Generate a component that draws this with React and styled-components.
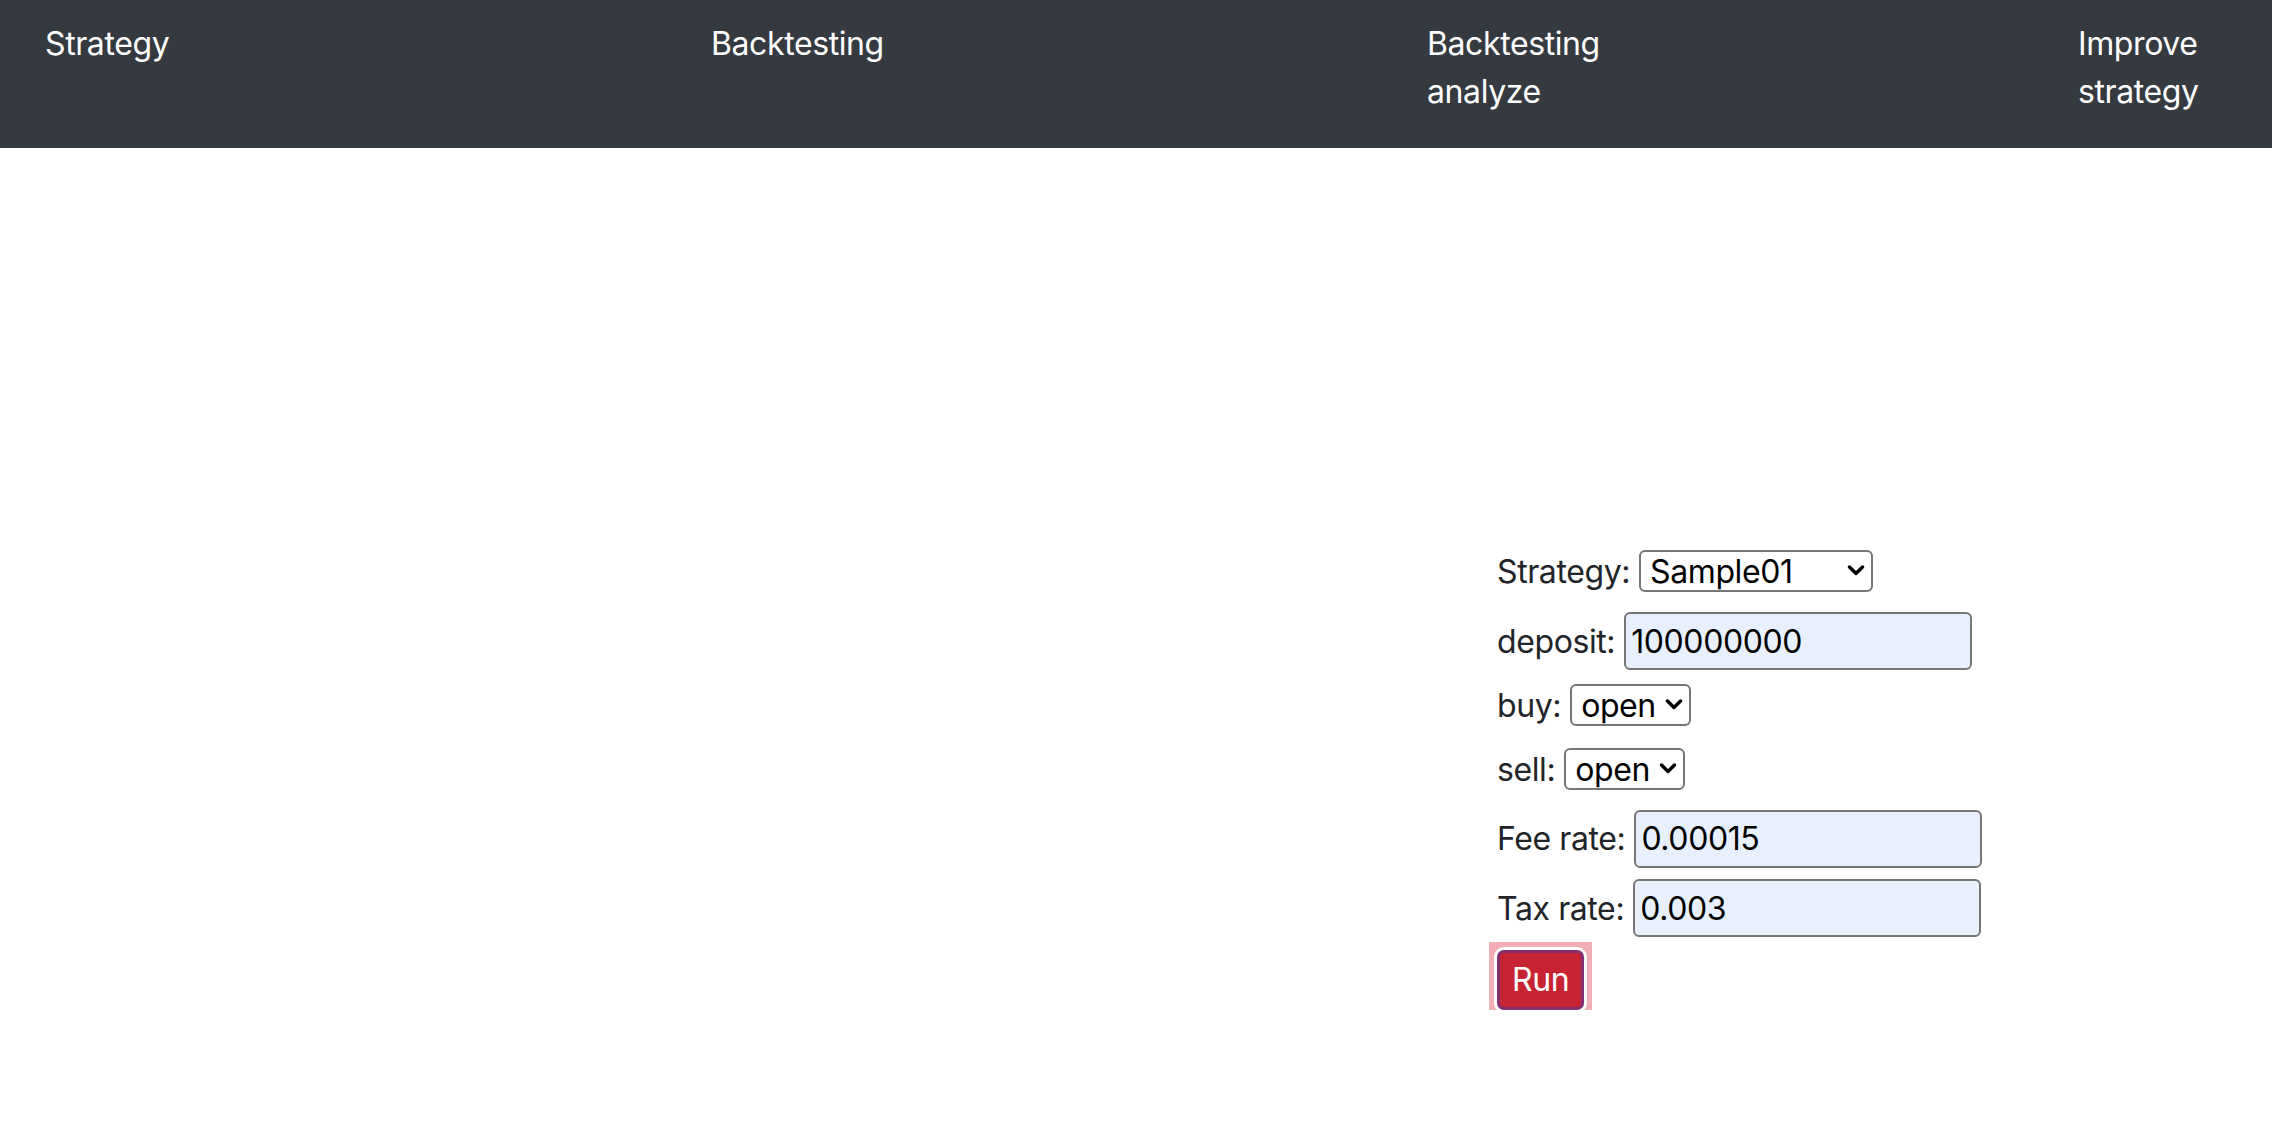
import React from 'react'
import styled, { createGlobalStyle } from 'styled-components'

const GlobalStyle = createGlobalStyle`
  *, *::before, *::after {
    box-sizing: border-box;
  }
  html {
    background: #fff;
  }
  html, body {
    margin: 0;
    padding: 0;
  }
  body {
    font-family: Inter, "Noto Sans", "Liberation Sans", sans-serif;
    font-size: 32px;
    line-height: 1.5;
    letter-spacing: -0.4px;
    color: #212529;
  }
`

const NavBar = styled.nav`
    background: #343a40;
    height: 148px;
    padding: 20px 45px 0 45px;
    display: grid;
    grid-template-columns: 666px 716px 651px 1fr;
    align-items: start;
`;

const NavLink = styled.a`
    display: block;
    max-width: 200px;
    color: #fff;
    text-decoration: none;
    cursor: pointer;
`;

const Main = styled.main`
    padding: 400px 0 0 1497px;
`;

const Form = styled.form`
    display: flex;
    flex-direction: column;
    align-items: flex-start;
`;

const Row = styled.div`
    display: flex;
    align-items: baseline;
`;

const Label = styled.label`
    margin: 0 9px 16px 0;
    white-space: nowrap;
`;

const SelectWrap = styled.span`
    position: relative;
    display: inline-flex;
    width: ${props => props.$width}px;
`;

const Select = styled.select`
    appearance: none;
    width: 100%;
    height: 42px;
    padding: 0 34px 0 9px;
    border: 2px solid #767676;
    border-radius: 6px;
    background: #fff;
    color: #000;
    font: inherit;
    letter-spacing: inherit;
    line-height: normal;
`;

const Chevron = styled.svg`
    position: absolute;
    right: 8px;
    top: 50%;
    transform: translateY(-55%);
    pointer-events: none;
`;

const TextInput = styled.input`
    width: ${props => props.$width || 348}px;
    height: 58px;
    padding: 0 5px;
    border: 2px solid #767676;
    border-radius: 6px;
    background: #e8f0fe;
    color: #000;
    font: inherit;
    letter-spacing: inherit;
`;

const RunButton = styled.button`
    position: relative;
    height: 60px;
    margin: 1px 0 0 0;
    padding: 0 12px;
    border: 3px solid #82306f;
    border-radius: 7px;
    background: #c82333;
    color: #fff;
    font: inherit;
    letter-spacing: inherit;
    line-height: 1;
    box-shadow: 0 0 0 3px #fff;
    cursor: pointer;

    &::before {
        content: '';
        position: absolute;
        inset: -11px;
        background: #f1aeb5;
        z-index: -1;
    }
`;

const DropDown = ({ width, value, options }) => (
    <SelectWrap $width={width}>
        <Select defaultValue={value}>
            {options.map(o => <option key={o}>{o}</option>)}
        </Select>
        <Chevron width="18" height="11" viewBox="0 0 18 11">
            <polyline points="2.5,2 9,8.5 15.5,2" fill="none" stroke="#000" strokeWidth="3.4" strokeLinecap="round" strokeLinejoin="round" />
        </Chevron>
    </SelectWrap>
)

const App = () => {
    return (
        <>
            <GlobalStyle />
            <NavBar>
                <NavLink>Strategy</NavLink>
                <NavLink>Backtesting</NavLink>
                <NavLink>Backtesting analyze</NavLink>
                <NavLink>Improve strategy</NavLink>
            </NavBar>
            <Main>
                <Form onSubmit={e => e.preventDefault()}>
                    <Row>
                        <Label>Strategy:</Label>
                        <DropDown width={234} value="Sample01" options={['Sample01', 'Sample02']} />
                    </Row>
                    <Row>
                        <Label>deposit:</Label>
                        <TextInput defaultValue="100000000" />
                    </Row>
                    <Row>
                        <Label>buy:</Label>
                        <DropDown width={121} value="open" options={['open', 'close']} />
                    </Row>
                    <Row>
                        <Label>sell:</Label>
                        <DropDown width={121} value="open" options={['open', 'close']} />
                    </Row>
                    <Row>
                        <Label>Fee rate:</Label>
                        <TextInput defaultValue="0.00015" />
                    </Row>
                    <Row>
                        <Label>Tax rate:</Label>
                        <TextInput defaultValue="0.003" />
                    </Row>
                    <RunButton type="submit">Run</RunButton>
                </Form>
            </Main>
        </>
    )
}
export default App
